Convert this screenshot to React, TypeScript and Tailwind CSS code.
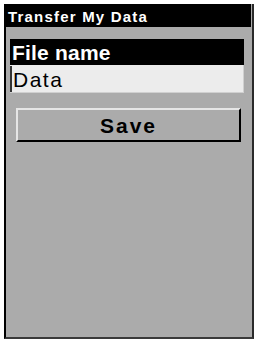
export default function App() {
  return (
    <div className="h-[340px] w-[256px] bg-white pl-[4px] pt-[4px] font-['Liberation_Sans',sans-serif]">
      <div className="flex h-[335px] w-[250px] flex-col border-b-2 border-l-2 border-r-2 border-b-[#3a3a3a] border-l-black border-r-[#2a2a2a] bg-[#ababab]">
        <div className="-ml-[2px] mr-[1px] flex h-[23px] items-center bg-black pl-[4px] pt-[2px] text-[15px] font-bold leading-none tracking-[1.2px] text-white">
          Transfer My Data
        </div>
        <div className="ml-[4px] mr-[8px] mt-[12px] flex h-[26px] items-center bg-black pl-[2px] pt-[1px] text-[21px] font-bold leading-none tracking-[0.2px] text-white">
          File name
        </div>
        <div className="ml-[4px] mr-[8px] flex h-[28px] items-center border-r border-b border-[#d0d0d0] bg-[#ececec] pt-[1px] text-[21px] leading-none tracking-[1.5px] text-black">
          <span className="mr-[1px] h-full w-[2px] bg-[#333]" />
          Data
        </div>
        <div className="ml-[10px] mr-[11px] mt-[15px] flex h-[34px] items-center justify-center border-b-2 border-l-2 border-r-2 border-t-2 border-b-black border-l-[#e6e6e6] border-r-black border-t-[#e6e6e6] bg-[#ababab] pt-[1px] text-[21px] font-bold leading-none tracking-[2px] text-black">
          Save
        </div>
      </div>
    </div>
  );
}
